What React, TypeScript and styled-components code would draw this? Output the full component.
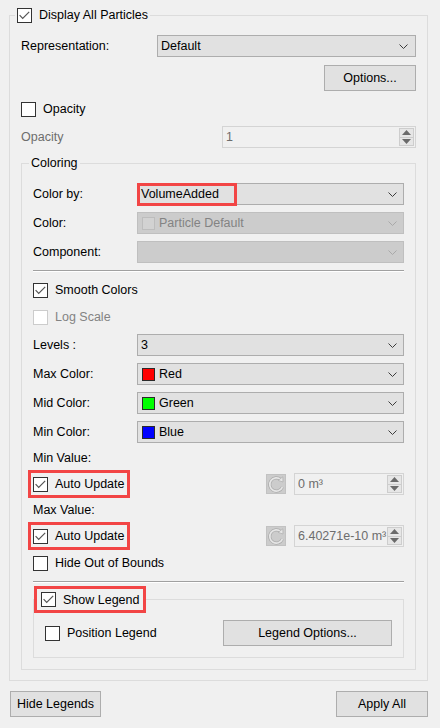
import React from 'react';
import styled, {createGlobalStyle} from 'styled-components';

const GlobalStyle = createGlobalStyle`
    html, body {
        margin: 0;
        padding: 0;
        background: #f0f0f0;
    }

    body {
        font-family: "Segoe UI", "Liberation Sans", Arial, sans-serif;
        font-size: 12.5px;
        color: #000;
    }
`;

const Window = styled.div`
    width: 440px;
    height: 728px;
    box-sizing: border-box;
    padding: 7px 12px 0 9px;
    display: flex;
    flex-direction: column;
`;

const GroupBox = styled.fieldset<{ $mt?: number }>`
    margin: ${p => p.$mt ?? 0}px 0 0 0;
    padding: 0;
    min-width: 0;
    border: 1px solid #dcdcdc;
`;

const Legend = styled.legend<{ $ml: number; $pad?: string }>`
    display: flex;
    align-items: center;
    margin-left: ${p => p.$ml}px;
    padding: ${p => p.$pad ?? '0 2px'};
    line-height: 16px;
`;

const GroupBody = styled.div<{ $pad: string }>`
    display: flex;
    flex-direction: column;
    padding: ${p => p.$pad};
`;

const Row = styled.div<{ $mt?: number; $h?: number }>`
    display: flex;
    align-items: center;
    margin-top: ${p => p.$mt ?? 0}px;
    height: ${p => p.$h ?? 22}px;
`;

const SpreadRow = styled(Row)`
    justify-content: space-between;
`;

const EndRow = styled(Row)`
    justify-content: flex-end;
`;

const FormRow = styled.div<{ $label: number; $mt?: number }>`
    display: grid;
    grid-template-columns: ${p => p.$label}px 1fr;
    align-items: center;
    margin-top: ${p => p.$mt ?? 0}px;
`;

const Label = styled.span<{ $disabled?: boolean }>`
    color: ${p => (p.$disabled ? '#6d6d6d' : '#000')};
    line-height: 15px;
    white-space: nowrap;
`;

const Caption = styled(Label)<{ $mt?: number }>`
    display: block;
    margin-top: ${p => p.$mt ?? 0}px;
`;

const Combo = styled.div<{ $disabled?: boolean; $pr?: number }>`
    position: relative;
    height: 22px;
    box-sizing: border-box;
    display: flex;
    align-items: center;
    gap: 4px;
    padding: 0 ${p => p.$pr ?? 6}px 0 3px;
    background: ${p => (p.$disabled ? '#cccccc' : '#e1e1e1')};
    border: 1px solid ${p => (p.$disabled ? '#bfbfbf' : '#adadad')};
    color: ${p => (p.$disabled ? '#838383' : '#000')};
    white-space: nowrap;
`;

const ComboText = styled.span`
    flex: 1;
`;

const Swatch = styled.span<{ $color: string; $disabled?: boolean }>`
    width: 13px;
    height: 13px;
    margin-left: 1px;
    box-sizing: border-box;
    background: ${p => p.$color};
    border: 1px solid ${p => (p.$disabled ? '#bdbdbd' : '#2a2a2a')};
`;

const Chevron = ({disabled}: { disabled?: boolean }) => (
    <svg width="9" height="5" viewBox="0 0 9 5">
        <polyline points="0.5,0.5 4.5,4.5 8.5,0.5" fill="none"
                  stroke={disabled ? '#a9a9a9' : '#3c3c3c'} strokeWidth="1"/>
    </svg>
);

const ComboBox = ({children, disabled, pr}: { children?: React.ReactNode; disabled?: boolean; pr?: number }) => (
    <Combo $disabled={disabled} $pr={pr}>
        <ComboText>{children}</ComboText>
        <Chevron disabled={disabled}/>
    </Combo>
);

const SwatchText = styled.span`
    display: flex;
    align-items: center;
    gap: 4px;
`;

const Button = styled.button<{ $w: number }>`
    width: ${p => p.$w}px;
    height: 26px;
    padding: 0;
    box-sizing: border-box;
    background: #e1e1e1;
    border: 1px solid #adadad;
    border-radius: 0;
    font: inherit;
    color: #000;
`;

const CheckLabel = styled.span<{ $disabled?: boolean }>`
    display: inline-flex;
    align-items: center;
    vertical-align: top;
    gap: 7px;
    height: 16px;
    white-space: nowrap;
    color: ${p => (p.$disabled ? '#838383' : '#000')};
`;

const Box = styled.span<{ $disabled?: boolean }>`
    width: 15px;
    height: 15px;
    box-sizing: border-box;
    display: flex;
    align-items: center;
    justify-content: center;
    background: #fff;
    border: 1px solid ${p => (p.$disabled ? '#cccccc' : '#333333')};
`;

const CheckBox = ({label, checked, disabled}: { label: string; checked?: boolean; disabled?: boolean }) => (
    <CheckLabel $disabled={disabled}>
        <Box $disabled={disabled}>
            {checked && (
                <svg width="13" height="13" viewBox="0 0 13 13">
                    <polyline points="1.6,6.2 4.7,9.4 11.2,2.9" fill="none" stroke="#555" strokeWidth="1.2"/>
                </svg>
            )}
        </Box>
        {label}
    </CheckLabel>
);

// red annotation drawn round a control in the reference
const Highlight = styled.span<{ $h: number; $px?: number }>`
    display: inline-flex;
    align-items: center;
    vertical-align: top;
    height: ${p => p.$h}px;
    padding: 0 ${p => p.$px ?? 0}px;
    outline: 3px solid #f24545;
    outline-offset: 2px;
`;

const ComboMark = styled.span`
    position: absolute;
    left: -1px;
    top: -1px;
    width: 100px;
    height: 23px;
    box-sizing: border-box;
    border: 3px solid #f24545;
`;

const Separator = styled.div<{ $mt: number }>`
    margin-top: ${p => p.$mt}px;
    height: 1px;
    background: #a0a0a0;
    border-bottom: 1px solid #fff;
`;

const Spin = styled.div<{ $w: number }>`
    width: ${p => p.$w}px;
    height: 22px;
    box-sizing: border-box;
    display: flex;
    align-items: center;
    padding-left: 3px;
    background: #f0f0f0;
    border: 1px solid #d4d4d4;
    color: #6d6d6d;
`;

const SpinText = styled.span`
    flex: 1;
    min-width: 0;
    overflow: hidden;
    white-space: nowrap;
`;

const SpinArrows = styled.div`
    width: 15px;
    height: 18px;
    margin-right: 1px;
    display: flex;
    flex-direction: column;
    box-sizing: border-box;
    border: 1px solid #cdcdcd;
    background: #e6e6e6;
`;

const SpinArrow = styled.div<{ $down?: boolean }>`
    flex: 1;
    display: flex;
    align-items: center;
    justify-content: center;
    border-top: ${p => (p.$down ? '1px solid #cdcdcd' : 'none')};
`;

const SpinBox = ({value, w}: { value: string; w: number }) => (
    <Spin $w={w}>
        <SpinText>{value}</SpinText>
        <SpinArrows>
            <SpinArrow>
                <svg width="9" height="5" viewBox="0 0 9 5"><polygon points="0,5 4.5,0 9,5" fill="#6a6a6a"/></svg>
            </SpinArrow>
            <SpinArrow $down>
                <svg width="9" height="5" viewBox="0 0 9 5"><polygon points="0,0 4.5,5 9,0" fill="#6a6a6a"/></svg>
            </SpinArrow>
        </SpinArrows>
    </Spin>
);

const ResetButton = styled.span`
    width: 20px;
    height: 20px;
    box-sizing: border-box;
    display: flex;
    align-items: center;
    justify-content: center;
    background: #cccccc;
    border: 1px solid #c2c2c2;
`;

const ResetIcon = () => (
    <svg width="18" height="18" viewBox="0 0 18 18">
        <path d="M13.8 4.6 A6.6 6.6 0 1 0 15.4 12.2" fill="none" stroke="#adadad" strokeWidth="3.2"/>
        <path d="M13.8 4.6 A6.6 6.6 0 1 0 15.4 12.2" fill="none" stroke="#e6e6e6" strokeWidth="1.7"/>
        <polygon points="11.2,5.4 15.8,1.8 16,7" fill="#e6e6e6" stroke="#adadad" strokeWidth="0.7"/>
    </svg>
);

const ValueControls = styled.div`
    margin-left: auto;
    display: flex;
    align-items: center;
    gap: 8px;
`;

const AutoRow = ({value}: { value: string }) => (
    <Row $mt={7}>
        <Highlight $h={18}>
            <CheckBox label="Auto Update" checked/>
        </Highlight>
        <ValueControls>
            <ResetButton><ResetIcon/></ResetButton>
            <SpinBox value={value} w={110}/>
        </ValueControls>
    </Row>
);

const BottomBar = styled.div`
    display: flex;
    justify-content: space-between;
    margin-top: 10px;
    padding-left: 1px;
`;

const colorRows = [
    {label: 'Max Color:', name: 'Red', color: '#ff0000'},
    {label: 'Mid Color:', name: 'Green', color: '#00ff00'},
    {label: 'Min Color:', name: 'Blue', color: '#0000ff'},
];

export default function App() {
    return (
        <Window>
            <GlobalStyle/>
            <GroupBox>
                <Legend $ml={5}>
                    <CheckBox label="Display All Particles" checked/>
                </Legend>
                <GroupBody $pad="12px 11px 10px 11px">
                    <FormRow $label={136}>
                        <Label>Representation:</Label>
                        <ComboBox pr={7}>Default</ComboBox>
                    </FormRow>
                    <EndRow $mt={8} $h={26}>
                        <Button $w={92}>Options...</Button>
                    </EndRow>
                    <Row $mt={10} $h={16}>
                        <CheckBox label="Opacity"/>
                    </Row>
                    <SpreadRow $mt={9}>
                        <Label $disabled>Opacity</Label>
                        <SpinBox value="1" w={194}/>
                    </SpreadRow>

                    <GroupBox $mt={7}>
                        <Legend $ml={7}>Coloring</Legend>
                        <GroupBody $pad="12px 11px 11px 11px">
                            <FormRow $label={104}>
                                <Label>Color by:</Label>
                                <Combo>
                                    <ComboText>VolumeAdded</ComboText>
                                    <Chevron/>
                                    <ComboMark/>
                                </Combo>
                            </FormRow>
                            <FormRow $label={104} $mt={7}>
                                <Label>Color:</Label>
                                <ComboBox disabled>
                                    <SwatchText>
                                        <Swatch $color="#d2d2d2" $disabled/>
                                        Particle Default
                                    </SwatchText>
                                </ComboBox>
                            </FormRow>
                            <FormRow $label={104} $mt={7}>
                                <Label>Component:</Label>
                                <ComboBox disabled/>
                            </FormRow>
                            <Separator $mt={7}/>
                            <Row $mt={10} $h={16}>
                                <CheckBox label="Smooth Colors" checked/>
                            </Row>
                            <Row $mt={11} $h={16}>
                                <CheckBox label="Log Scale" disabled/>
                            </Row>
                            <FormRow $label={104} $mt={9}>
                                <Label>Levels :</Label>
                                <ComboBox>3</ComboBox>
                            </FormRow>
                            {colorRows.map(row => (
                                <FormRow key={row.label} $label={104} $mt={7}>
                                    <Label>{row.label}</Label>
                                    <ComboBox>
                                        <SwatchText>
                                            <Swatch $color={row.color}/>
                                            {row.name}
                                        </SwatchText>
                                    </ComboBox>
                                </FormRow>
                            ))}
                            <Caption $mt={8}>Min Value:</Caption>
                            <AutoRow value="0 m³"/>
                            <Caption $mt={8}>Max Value:</Caption>
                            <AutoRow value="6.40271e-10 m³"/>
                            <Row $mt={8} $h={16}>
                                <CheckBox label="Hide Out of Bounds"/>
                            </Row>
                            <Separator $mt={10}/>

                            <GroupBox $mt={3}>
                                <Legend $ml={0} $pad="5px">
                                    <Highlight $h={17} $px={2}>
                                        <CheckBox label="Show Legend" checked/>
                                    </Highlight>
                                </Legend>
                                <GroupBody $pad="7px 11px 11px 11px">
                                    <SpreadRow $h={26}>
                                        <CheckBox label="Position Legend"/>
                                        <Button $w={169}>Legend Options...</Button>
                                    </SpreadRow>
                                </GroupBody>
                            </GroupBox>
                        </GroupBody>
                    </GroupBox>
                </GroupBody>
            </GroupBox>
            <BottomBar>
                <Button $w={91}>Hide Legends</Button>
                <Button $w={92}>Apply All</Button>
            </BottomBar>
        </Window>
    );
}
